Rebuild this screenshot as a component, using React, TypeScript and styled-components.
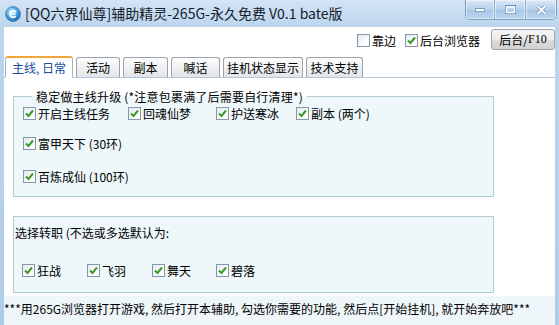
import * as React from 'react';
import styled, { createGlobalStyle } from 'styled-components';

const GlobalStyle = createGlobalStyle`
  html, body {
    margin: 0;
    padding: 0;
  }
  body {
    font-family: "Noto Sans CJK SC", "Noto Sans", sans-serif;
    font-size: 12px;
    color: #000;
  }
`;

const Window = styled.div`
  width: 559px;
  height: 325px;
  box-sizing: border-box;
  overflow: hidden;
  padding: 0 4px 0 4px;
  display: flex;
  flex-direction: column;
  background: linear-gradient(180deg, #d2e4f5 0px, #bcd5ed 27px, #aecdea 100%);
`;

const TitleBar = styled.div`
  height: 27px;
  margin: 0 -4px;
  padding-left: 5px;
  display: flex;
  align-items: flex-start;
  flex-shrink: 0;
`;

const AppIcon = styled.svg`
  width: 16px;
  height: 16px;
  margin-top: 6px;
  flex-shrink: 0;
`;

const Title = styled.div`
  margin-left: 4px;
  line-height: 27px;
  font-size: 14px;
  color: #15202c;
  white-space: nowrap;
  flex: 1;
`;

const Controls = styled.div`
  display: flex;
  margin-right: 2px;
  height: 19px;
  border: 1px solid #7f9fc0;
  border-top: none;
  border-radius: 0 0 5px 5px;
  overflow: hidden;
`;

const CtlButton = styled.div<{ $w: number; $last?: boolean }>`
  width: ${(p) => p.$w}px;
  height: 19px;
  display: flex;
  align-items: center;
  justify-content: center;
  background: linear-gradient(180deg, #d9e8f6 0%, #b8d2ec 50%, #a6c5e6 51%, #bcd6f0 100%);
  border-right: ${(p) => (p.$last ? 'none' : '1px solid #8fb0d2')};
  box-shadow: inset 0 0 0 1px rgba(255, 255, 255, 0.5);
`;

const Client = styled.div`
  flex: 1;
  background: #ffffff;
  display: flex;
  flex-direction: column;
  min-height: 0;
`;

const TopBar = styled.div`
  height: 27px;
  display: flex;
  align-items: center;
  justify-content: flex-end;
  flex-shrink: 0;
`;

const CheckLabel = styled.label<{ $mr?: number }>`
  display: inline-flex;
  align-items: center;
  height: 17px;
  gap: 2px;
  margin-right: ${(p) => p.$mr ?? 0}px;
  white-space: nowrap;
  line-height: 17px;
`;

const Box = styled.span`
  width: 13px;
  height: 13px;
  box-sizing: border-box;
  border: 1px solid #8797a8;
  background: linear-gradient(135deg, #e6eaee 0%, #ffffff 80%);
  display: inline-flex;
  align-items: center;
  justify-content: center;
  flex-shrink: 0;
`;

const PushButton = styled.div`
  width: 64px;
  height: 21px;
  box-sizing: border-box;
  border: 1px solid #9aa6b2;
  border-radius: 3px;
  background: linear-gradient(180deg, #f6f6f6 0%, #ebebeb 50%, #dcdcdc 51%, #d2d2d2 100%);
  display: flex;
  align-items: center;
  justify-content: center;
  font-size: 12px;
  margin-top: -2px;
  margin-left: 11px;
`;

const Mono = styled.span`
  font-family: "Liberation Serif", serif;
  font-size: 12px;
`;

const TabStrip = styled.div`
  height: 23px;
  display: flex;
  align-items: flex-end;
  gap: 3px;
  padding-left: 1px;
  flex-shrink: 0;
  position: relative;
  z-index: 1;
`;

const Tab = styled.div<{ $w: number; $active?: boolean }>`
  width: ${(p) => p.$w}px;
  height: ${(p) => (p.$active ? 22 : 20)}px;
  box-sizing: border-box;
  border: 1px solid ${(p) => (p.$active ? '#9fb5c8' : '#9aa3ac')};
  border-bottom: ${(p) => (p.$active ? '1px solid #ffffff' : 'none')};
  border-top: ${(p) => (p.$active ? '2px solid #f0a43c' : '1px solid #9aa3ac')};
  border-radius: 3px 3px 0 0;
  margin-bottom: ${(p) => (p.$active ? -1 : 0)}px;
  background: ${(p) =>
    p.$active ? '#ffffff' : 'linear-gradient(180deg, #fdfdfd 0%, #f0f1f2 50%, #e3e5e8 100%)'};
  color: ${(p) => (p.$active ? '#1a4e9e' : '#000')};
  display: flex;
  align-items: center;
  justify-content: center;
  font-size: 12px;
  white-space: nowrap;
`;

const Panel = styled.div`
  border-top: 1px solid #b3c7d6;
  height: 219px;
  flex-shrink: 0;
  box-sizing: border-box;
  padding: 10px 0 0 9px;
  display: flex;
  flex-direction: column;
`;

const Group = styled.fieldset`
  margin: 0;
  width: 481px;
  box-sizing: border-box;
  border: 1px solid #b2cbd6;
  background: #eef7fa;
  padding: 0 0 11px 9px;
  min-inline-size: 0;
`;

const Legend = styled.legend`
  margin-left: 9px;
  padding: 0 4px 0 4px;
  line-height: 17px;
  white-space: nowrap;
  letter-spacing: 0.2px;
`;

const Row = styled.div<{ $top?: number; $left?: number; $cols: string }>`
  display: grid;
  grid-template-columns: ${(p) => p.$cols};
  height: 17px;
  margin-top: ${(p) => p.$top ?? 0}px;
  padding-left: ${(p) => p.$left ?? 0}px;
`;

const Group2 = styled.div`
  margin-top: 19px;
  width: 481px;
  height: 77px;
  box-sizing: border-box;
  border: 1px solid #b2cbd6;
  background: #eef7fa;
  padding: 7px 0 0 0;
`;

const Note = styled.div`
  line-height: 17px;
  padding-left: 1px;
  white-space: nowrap;
`;

const Footer = styled.div`
  flex: 1;
  background: #eef6f9;
  line-height: 26px;
  white-space: nowrap;
`;

function Check({ checked, children, mr }: { checked?: boolean; children: React.ReactNode; mr?: number }) {
  return (
    <CheckLabel $mr={mr}>
      <Box>
        {checked && (
          <svg width="9" height="9" viewBox="0 0 9 9">
            <path d="M1 4.5 L3.5 7 L8 1.5" fill="none" stroke="#3b9a2c" strokeWidth="2" />
          </svg>
        )}
      </Box>
      <span>{children}</span>
    </CheckLabel>
  );
}

const tabs = [
  { label: '主线, 日常', w: 68, active: true },
  { label: '活动', w: 44 },
  { label: '副本', w: 45 },
  { label: '喊话', w: 49 },
  { label: '挂机状态显示', w: 80 },
  { label: '技术支持', w: 57 },
];

export default function App() {
  return (
    <>
      <GlobalStyle />
      <Window>
        <TitleBar>
          <AppIcon viewBox="0 0 16 16">
            <defs>
              <radialGradient id="g" cx="40%" cy="35%" r="65%">
                <stop offset="0%" stopColor="#e8f6ff" />
                <stop offset="45%" stopColor="#5bb4ea" />
                <stop offset="100%" stopColor="#1a6fb8" />
              </radialGradient>
            </defs>
            <circle cx="8" cy="8" r="7.5" fill="url(#g)" stroke="#2a6ea8" strokeWidth="0.6" />
            <path d="M10.8 6.2 A3.2 3.2 0 1 0 10.6 10.2" fill="none" stroke="#ffffff" strokeWidth="1.8" />
            <path d="M5.2 8 H10.8" stroke="#ffffff" strokeWidth="1.4" />
          </AppIcon>
          <Title>[QQ六界仙尊]辅助精灵-265G-永久免费 V0.1 bate版</Title>
          <Controls>
            <CtlButton $w={28}>
              <svg width="10" height="4" viewBox="0 0 10 4">
                <rect x="0.5" y="0.5" width="9" height="3" fill="#fff" stroke="#6f8fb0" strokeWidth="0.8" />
              </svg>
            </CtlButton>
            <CtlButton $w={30}>
              <svg width="11" height="9" viewBox="0 0 11 9">
                <rect x="0.5" y="0.5" width="10" height="8" fill="none" stroke="#6f8fb0" strokeWidth="1" />
                <rect x="1.5" y="2" width="8" height="5.5" fill="none" stroke="#fff" strokeWidth="1.5" />
              </svg>
            </CtlButton>
            <CtlButton $w={30} $last>
              <svg width="11" height="10" viewBox="0 0 11 10">
                <path d="M1.5 1 L9.5 9 M9.5 1 L1.5 9" stroke="#6f8fb0" strokeWidth="3.2" />
                <path d="M1.5 1 L9.5 9 M9.5 1 L1.5 9" stroke="#fff" strokeWidth="1.8" />
              </svg>
            </CtlButton>
          </Controls>
        </TitleBar>
        <Client>
          <TopBar>
            <Check mr={9}>靠边</Check>
            <Check checked>后台浏览器</Check>
            <PushButton>
              后台/<Mono>F10</Mono>
            </PushButton>
          </TopBar>
          <TabStrip>
            {tabs.map((t) => (
              <Tab key={t.label} $w={t.w} $active={t.active}>
                {t.label}
              </Tab>
            ))}
          </TabStrip>
          <Panel>
            <Group>
              <Legend>稳定做主线升级 (*注意包裹满了后需要自行清理*)</Legend>
              <Row $cols="105px 88px 80px 1fr">
                <Check checked>开启主线任务</Check>
                <Check checked>回魂仙梦</Check>
                <Check checked>护送寒冰</Check>
                <Check checked>副本 (两个)</Check>
              </Row>
              <Row $top={13} $cols="1fr">
                <Check checked>富甲天下 (30环)</Check>
              </Row>
              <Row $top={16} $cols="1fr">
                <Check checked>百炼成仙 (100环)</Check>
              </Row>
            </Group>
            <Group2>
              <Note>选择转职 (不选或多选默认为:</Note>
              <Row $top={21} $left={8} $cols="65px 65px 64px 1fr">
                <Check checked>狂战</Check>
                <Check checked>飞羽</Check>
                <Check checked>舞天</Check>
                <Check checked>碧落</Check>
              </Row>
            </Group2>
          </Panel>
          <Footer>***用265G浏览器打开游戏, 然后打开本辅助, 勾选你需要的功能, 然后点[开始挂机], 就开始奔放吧***</Footer>
        </Client>
      </Window>
    </>
  );
}
